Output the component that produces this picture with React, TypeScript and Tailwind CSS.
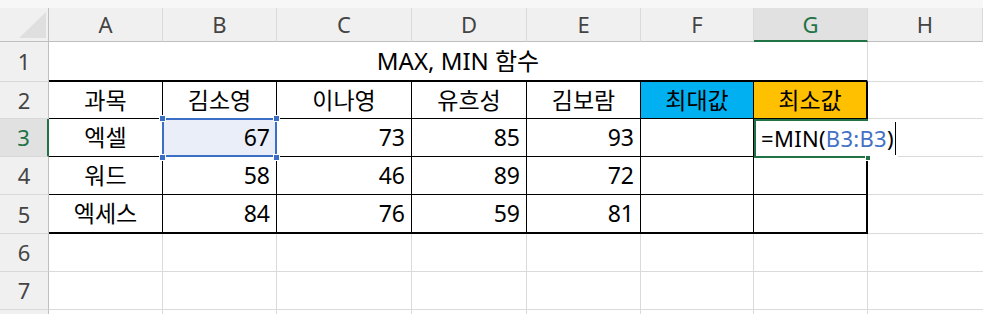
import React from "react";

/* ================= DATA ================= */

const COLS = ["A", "B", "C", "D", "E", "F", "G", "H"];

const NAMES = ["김소영", "이나영", "유흐성", "김보람"];

const SCORES: [string, number[]][] = [
  ["엑셀", [67, 73, 85, 93]],
  ["워드", [58, 46, 89, 72]],
  ["엑세스", [84, 76, 59, 81]],
];

const ROW_H = ["h-[40px]", "h-[37px]", "h-[38px]", "h-[38px]", "h-[39px]", "h-[38px]", "h-[38px]", "h-[38px]"];

/* ================= PIECES ================= */

const RowHead = ({ n, active, label = true }: { n: number; active?: boolean; label?: boolean }) => (
  <div
    className={`${ROW_H[n - 1]} flex items-center justify-center text-[22px] border-b border-b-[#d9d9d9] ${
      active
        ? "bg-[#e1e1e1] text-[#217346] border-r-2 border-r-[#217346]"
        : "bg-[#f0f0f0] text-[#444] border-r border-r-[#bfbfbf]"
    }`}
  >
    {label ? n : null}
  </div>
);

const Grid = ({ h, extra = "" }: { h: string; extra?: string }) => (
  <div className={`${h} border-r border-b border-[#dadada] ${extra}`} />
);

const Handle = ({ pos, color }: { pos: string; color: string }) => (
  <span className={`absolute w-[7px] h-[7px] border border-white ${color} ${pos}`} />
);

/* ================= APP ================= */

export default function App() {
  return (
    <div className="w-[983px] h-[314px] overflow-hidden bg-white font-['Noto_Sans','Noto_Sans_CJK_KR',sans-serif] text-[23px] text-black">
      {/* top strip */}
      <div className="h-[8px] bg-[#f7f7f7]" />

      <div className="grid grid-cols-[49px_114px_114px_135px_115px_114px_113px_114px_1fr]">
        {/* ================= COLUMN HEADERS ================= */}

        <div className="h-[34px] bg-[#f0f0f0] border-r border-b border-r-[#bfbfbf] border-b-[#bfbfbf] flex items-end justify-end pr-[2px] pb-[3px]">
          <svg width="27" height="26" viewBox="0 0 27 26">
            <polygon points="27,0 27,26 0,26" fill="#dfdfdf" />
          </svg>
        </div>

        {COLS.map((c) =>
          c === "G" ? (
            <div
              key={c}
              className="h-[34px] text-[22px] bg-[#e1e1e1] text-[#217346] border-r border-r-[#dadada] border-b-2 border-b-[#217346] flex items-center justify-center"
            >
              {c}
            </div>
          ) : (
            <div
              key={c}
              className="h-[34px] text-[22px] bg-[#f0f0f0] text-[#444] border-r border-r-[#dadada] border-b border-b-[#bfbfbf] flex items-center justify-center"
            >
              {c}
            </div>
          )
        )}

        {/* ================= ROW 1 ================= */}

        <RowHead n={1} />
        <div className="col-span-7 h-[40px] flex items-center justify-center text-[24px] border-r border-r-[#dadada] border-b-2 border-b-black">
          MAX, MIN 함수
        </div>
        <Grid h="h-[40px]" extra="border-r-0" />

        {/* ================= ROW 2 ================= */}

        <RowHead n={2} />
        <div className="h-[37px] flex items-center justify-center border-r border-b border-black">과목</div>
        {NAMES.map((n) => (
          <div key={n} className="h-[37px] flex items-center justify-center border-r border-b border-black">
            {n}
          </div>
        ))}
        <div className="h-[37px] flex items-center justify-center bg-[#00b0f0] border-r border-b border-black">
          최대값
        </div>
        <div className="h-[37px] flex items-center justify-center bg-[#ffc000] border-r-2 border-b border-black">
          최소값
        </div>
        <Grid h="h-[37px]" extra="border-r-0" />

        {/* ================= ROWS 3-5 ================= */}

        {SCORES.map(([subject, nums], i) => {
          const h = ROW_H[i + 2];
          const bottom = i === 2 ? "border-b-2" : "border-b";

          return (
            <React.Fragment key={subject}>
              <RowHead n={i + 3} active={i === 0} />

              <div className={`${h} flex items-center justify-center border-r ${bottom} border-black`}>
                {subject}
              </div>

              {nums.map((v, j) =>
                i === 0 && j === 0 ? (
                  <div
                    key={j}
                    className={`${h} relative z-10 flex items-center justify-end pr-[6px] bg-[#e9eef8] border-r ${bottom} border-black`}
                  >
                    {v}
                    <div className="absolute -left-[1px] -top-[1px] -right-[1px] -bottom-[1px] border-2 border-[#3b6fc5]" />
                    <Handle pos="-left-[4px] -top-[4px]" color="bg-[#3b6fc5]" />
                    <Handle pos="-right-[4px] -top-[4px]" color="bg-[#3b6fc5]" />
                    <Handle pos="-left-[4px] -bottom-[5px]" color="bg-[#3b6fc5]" />
                    <Handle pos="-right-[4px] -bottom-[5px]" color="bg-[#3b6fc5]" />
                  </div>
                ) : (
                  <div key={j} className={`${h} flex items-center justify-end pr-[6px] border-r ${bottom} border-black`}>
                    {v}
                  </div>
                )
              )}

              <div className={`${h} border-r ${bottom} border-black`} />

              {i === 0 ? (
                <div className={`${h} relative z-10 border-r-2 ${bottom} border-black`}>
                  {/* ===== IN-CELL EDITOR ===== */}
                  <div className="absolute left-0 top-0 w-[144px] h-[38px] bg-white flex items-center pl-[7px] text-[22px] tracking-[0.3px] whitespace-nowrap">
                    <div className="absolute left-0 top-0 w-[114px] h-[39px] border-l-2 border-t-2 border-b-2 border-[#217346]" />
                    <span className="absolute left-[111px] top-[36px] w-[6px] h-[6px] bg-[#217346] border border-white" />
                    <span className="shrink-0">=MIN(</span>
                    <span className="shrink-0 text-[#4472c4]">B3:B3</span>
                    <span className="shrink-0">)</span>
                    <span className="shrink-0 ml-[1px] w-px h-[33px] bg-black" />
                  </div>
                </div>
              ) : (
                <div className={`${h} border-r-2 ${bottom} border-black`} />
              )}

              <Grid h={h} extra="border-r-0" />
            </React.Fragment>
          );
        })}

        {/* ================= ROWS 6-8 ================= */}

        {[6, 7, 8].map((n) => (
          <React.Fragment key={n}>
            <RowHead n={n} label={n < 8} />
            {COLS.map((c) => (
              <Grid key={c} h={ROW_H[n - 1]} extra={c === "H" ? "border-r-0" : ""} />
            ))}
          </React.Fragment>
        ))}
      </div>
    </div>
  );
}
